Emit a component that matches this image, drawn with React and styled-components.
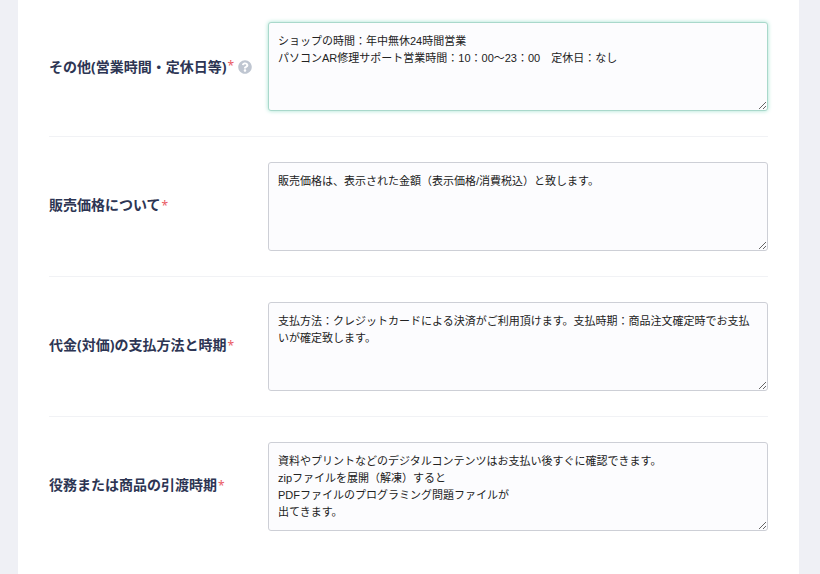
import { useEffect, useRef, useState } from 'react';
import { styled, createGlobalStyle } from 'styled-components';
import { FaQuestionCircle } from 'react-icons/fa';

const GlobalStyle = createGlobalStyle`
  * {
    box-sizing: border-box;
  }
  body {
    margin: 0;
    background-color: #eff0f5;
    font-family: 'Liberation Sans', 'Noto Sans CJK JP', sans-serif;
  }
`;

const Page = styled.main`
  min-height: 100vh;
  padding: 0 21px 0 18px;
  display: flex;
`;

const SettingForm = styled.form`
  flex: 1;
  padding: 0 31px;
  background-color: #fff;
`;

const Row = styled.div`
  display: flex;
  align-items: center;
  padding: 25px 0;
  border-bottom: 1px solid #f1f2f5;
  &:first-child {
    padding-top: 22px;
  }
  &:last-child {
    border-bottom: none;
  }
`;

const LabelBox = styled.div`
  flex: 0 0 219px;
  display: flex;
  align-items: center;
  padding-bottom: ${(props) => (props.$help ? '0' : '3px')};
  white-space: nowrap;
`;

const Label = styled.label`
  color: #2d3553;
  font-family: 'Noto Sans', 'Noto Sans CJK JP', sans-serif;
  font-size: 14px;
  font-weight: 700;
  line-height: 20px;
`;

const Required = styled.span`
  margin-left: 1px;
  color: #ea5a64;
  font-size: 12px;
  font-weight: 400;
  line-height: 1;
  vertical-align: ${(props) => (props.$raised ? '2px' : 'baseline')};
`;

const HelpButton = styled.button`
  display: flex;
  margin-left: 4px;
  padding: 0;
  border: none;
  background: none;
  color: #bfc6d1;
  font-size: 14px;
  cursor: pointer;
`;

const TextArea = styled.textarea`
  display: block;
  flex: 1;
  min-width: 0;
  height: 89px;
  padding: 10px 9px 8px;
  border: 1px solid #cdcfd6;
  border-radius: 3px;
  background-color: #fcfcfe;
  color: #222;
  font-family: inherit;
  font-size: 11px;
  line-height: 17px;
  outline: none;
  resize: vertical;
  &:focus {
    border-color: #a9d8cb;
    box-shadow: 0 0 4px #a5e3d1;
  }
`;

const fields = [
  { name: 'other', label: 'その他(営業時間・定休日等)', help: true },
  { name: 'price', label: '販売価格について' },
  { name: 'payment', label: '代金(対価)の支払方法と時期' },
  { name: 'delivery', label: '役務または商品の引渡時期' },
];

const initialValues = {
  other:
    'ショップの時間：年中無休24時間営業\nパソコンAR修理サポート営業時間：10：00～23：00　定休日：なし',
  price: '販売価格は、表示された金額（表示価格/消費税込）と致します。',
  payment:
    '支払方法：クレジットカードによる決済がご利用頂けます。支払時期：商品注文確定時でお支払いが確定致します。',
  delivery:
    '資料やプリントなどのデジタルコンテンツはお支払い後すぐに確認できます。\nzipファイルを展開（解凍）すると\nPDFファイルのプログラミング問題ファイルが\n出てきます。',
};

export default function App() {
  const [values, setValues] = useState(initialValues);
  const otherRef = useRef(null);

  // 営業終了時刻の「0」と「0」の間にカーソルを置く
  useEffect(() => {
    const position = initialValues.other.indexOf('23：00') + 4;
    otherRef.current.focus();
    otherRef.current.setSelectionRange(position, position);
  }, []);

  const handleChange = (e) => {
    setValues({ ...values, [e.target.name]: e.target.value });
  };

  return (
    <>
      <GlobalStyle />
      <Page>
        <SettingForm>
          {fields.map((field) => (
            <Row key={field.name}>
              <LabelBox $help={field.help}>
                <Label htmlFor={field.name}>
                  {field.label}
                  <Required $raised={field.help}>*</Required>
                </Label>
                {field.help && (
                  <HelpButton type="button" aria-label="ヘルプ">
                    <FaQuestionCircle />
                  </HelpButton>
                )}
              </LabelBox>
              <TextArea
                id={field.name}
                name={field.name}
                ref={field.name === 'other' ? otherRef : null}
                value={values[field.name]}
                onChange={handleChange}
                required
              />
            </Row>
          ))}
        </SettingForm>
      </Page>
    </>
  );
}
